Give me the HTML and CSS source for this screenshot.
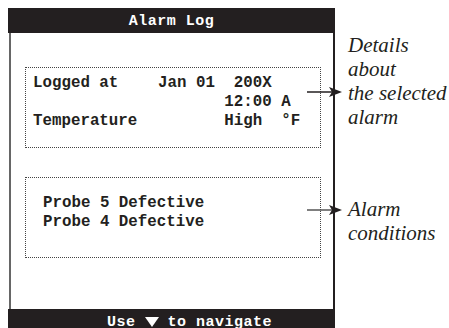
FILE: index.html
```html
<!DOCTYPE html>
<html lang="en">
<head>
    <meta charset="UTF-8">
    <meta name="viewport" content="width=device-width, initial-scale=1.0">
    <title>Alarm Log</title>
    <link rel="stylesheet" href="styles.css">
</head>
<body>
    <div class="page">
        <div class="device">
            <div class="title-bar">Alarm Log</div>
            <div class="screen">
                <div class="panel details">
                    <div class="row"><span class="label">Logged at</span><span class="value">Jan 01  200X</span></div>
                    <div class="row"><span class="label"></span><span class="value">       12:00 A</span></div>
                    <div class="row"><span class="label">Temperature</span><span class="value">       High  °F</span></div>
                </div>
                <div class="panel conditions">
                    <div class="row">Probe 5 Defective</div>
                    <div class="row">Probe 4 Defective</div>
                </div>
            </div>
            <div class="nav-bar">
                <span>Use</span>
                <svg class="down" width="14" height="10" viewBox="0 0 14 10"><polygon points="0,0 14,0 7,10" fill="#fff"/></svg>
                <span>to navigate</span>
            </div>
        </div>

        <div class="notes">
            <div class="note first">Details<br>about<br>the selected<br>alarm</div>
            <div class="note second">Alarm<br>conditions</div>
        </div>

        <!-- callout arrows cross the screen edge -->
        <svg class="arrow arrow-details" width="36" height="12" viewBox="0 0 36 12">
            <line x1="0" y1="6" x2="26" y2="6" stroke="#231f20" stroke-width="1.5"/>
            <polygon points="22,1 35,6 22,11 25,6" fill="#231f20"/>
        </svg>
        <svg class="arrow arrow-conditions" width="36" height="12" viewBox="0 0 36 12">
            <line x1="0" y1="6" x2="26" y2="6" stroke="#555" stroke-width="1.5"/>
            <polygon points="22,1 35,6 22,11 25,6" fill="#231f20"/>
        </svg>
    </div>
</body>
</html>
```

FILE: styles.css
```css
html, body {
    margin: 0;
    padding: 0;
    background: #fff;
    overflow: hidden;
    color: #231f20;
}
.page {
    position: relative;
    display: flex;
    padding: 8px 0 0 8px;
}
.device {
    width: 327px;
    display: flex;
    flex-direction: column;
    font-family: "Liberation Mono", "DejaVu Sans Mono", monospace;
    font-weight: 700;
}
.title-bar {
    height: 25px;
    background: #231f20;
    color: #fff;
    font-size: 15px;
    letter-spacing: 0.5px;
    line-height: 23px;
    padding-top: 2px;
    box-sizing: border-box;
    text-align: center;
}
.screen {
    height: 276px;
    margin-left: 1px;
    border-left: 2px solid #666;
    border-right: 2px solid #231f20;
    padding-top: 34px;
    box-sizing: border-box;
}
.panel {
    width: 296px;
    margin-left: 14px;
    border: 1px dotted #444;
    font-size: 15.8px;
    line-height: 19px;
}
.details {
    height: 81px;
    padding: 6px 0 0 7px;
    box-sizing: border-box;
}
.row {
    display: flex;
    height: 19px;
}
.label {
    width: 125px;
}
.value {
    white-space: pre;
}
.conditions {
    height: 81px;
    margin-top: 29px;
    padding: 16px 0 0 17px;
    box-sizing: border-box;
}
.nav-bar {
    height: 24px;
    background: #231f20;
    color: #fff;
    font-size: 15px;
    letter-spacing: 0.5px;
    line-height: 20px;
    padding: 4px 0 0 99px;
    box-sizing: border-box;
    display: flex;
    align-items: flex-start;
    gap: 9px;
}
.down {
    margin-top: 4px;
}
.notes {
    margin-left: 13px;
    font-family: "Liberation Serif", "Times New Roman", serif;
    font-style: italic;
    font-size: 21px;
    line-height: 24px;
}
.note.first {
    margin-top: 25px;
}
.note.second {
    margin-top: 68px;
}
.arrow {
    position: absolute;
    left: 307px;
}
.arrow-details {
    top: 86px;
}
.arrow-conditions {
    top: 204px;
}
```
